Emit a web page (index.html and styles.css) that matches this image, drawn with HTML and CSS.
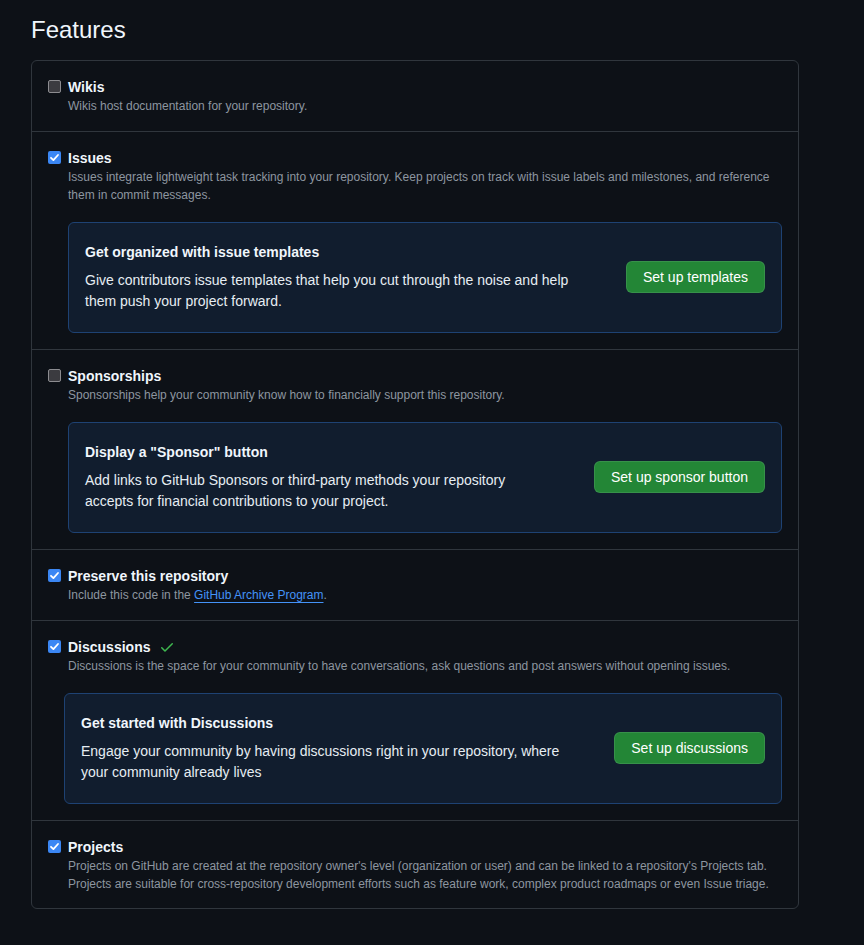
FILE: index.html
```html
<!DOCTYPE html>
<html lang="en">
<head>
<meta charset="utf-8">
<title>Features</title>
<link rel="stylesheet" href="styles.css">
</head>
<body>
<main class="page">
  <h2 class="page-title">Features</h2>
  <div class="feature-list">
    <section class="feature">
      <span class="checkbox"></span>
      <div class="feature-body">
        <div class="feature-title">Wikis</div>
        <p class="feature-desc">Wikis host documentation for your repository.</p>
      </div>
    </section>

    <section class="feature">
      <span class="checkbox checked"><svg viewBox="0 0 13 13" width="13" height="13"><path d="M3 6.8 5.4 9.1 10 4" fill="none" stroke="#fff" stroke-width="1.8" stroke-linecap="round" stroke-linejoin="round"/></svg></span>
      <div class="feature-body">
        <div class="feature-title">Issues</div>
        <p class="feature-desc">Issues integrate lightweight task tracking into your repository. Keep projects on track with issue labels and milestones, and reference them in commit messages.</p>
        <div class="promo">
          <div class="promo-text">
            <div class="promo-title">Get organized with issue templates</div>
            <p class="promo-desc">Give contributors issue templates that help you cut through the noise and help them push your project forward.</p>
          </div>
          <button class="btn-primary">Set up templates</button>
        </div>
      </div>
    </section>

    <section class="feature">
      <span class="checkbox"></span>
      <div class="feature-body">
        <div class="feature-title">Sponsorships</div>
        <p class="feature-desc">Sponsorships help your community know how to financially support this repository.</p>
        <div class="promo">
          <div class="promo-text">
            <div class="promo-title">Display a "Sponsor" button</div>
            <p class="promo-desc">Add links to GitHub Sponsors or third-party methods your repository accepts for financial contributions to your project.</p>
          </div>
          <button class="btn-primary">Set up sponsor button</button>
        </div>
      </div>
    </section>

    <section class="feature">
      <span class="checkbox checked"><svg viewBox="0 0 13 13" width="13" height="13"><path d="M3 6.8 5.4 9.1 10 4" fill="none" stroke="#fff" stroke-width="1.8" stroke-linecap="round" stroke-linejoin="round"/></svg></span>
      <div class="feature-body">
        <div class="feature-title">Preserve this repository</div>
        <p class="feature-desc">Include this code in the <a class="link" href="#">GitHub Archive Program</a>.</p>
      </div>
    </section>

    <section class="feature">
      <span class="checkbox checked"><svg viewBox="0 0 13 13" width="13" height="13"><path d="M3 6.8 5.4 9.1 10 4" fill="none" stroke="#fff" stroke-width="1.8" stroke-linecap="round" stroke-linejoin="round"/></svg></span>
      <div class="feature-body">
        <div class="feature-title">Discussions <svg class="ok-icon" viewBox="0 0 16 16" width="16" height="16"><path fill="#3fb950" d="M13.78 4.22a.75.75 0 0 1 0 1.06l-7.25 7.25a.75.75 0 0 1-1.06 0L2.22 9.28a.751.751 0 0 1 .018-1.042.751.751 0 0 1 1.042-.018L6 10.94l6.72-6.72a.75.75 0 0 1 1.06 0Z"/></svg></div>
        <p class="feature-desc">Discussions is the space for your community to have conversations, ask questions and post answers without opening issues.</p>
        <div class="promo promo-wide">
          <div class="promo-text">
            <div class="promo-title">Get started with Discussions</div>
            <p class="promo-desc">Engage your community by having discussions right in your repository, where your community already lives</p>
          </div>
          <button class="btn-primary">Set up discussions</button>
        </div>
      </div>
    </section>

    <section class="feature">
      <span class="checkbox checked"><svg viewBox="0 0 13 13" width="13" height="13"><path d="M3 6.8 5.4 9.1 10 4" fill="none" stroke="#fff" stroke-width="1.8" stroke-linecap="round" stroke-linejoin="round"/></svg></span>
      <div class="feature-body">
        <div class="feature-title">Projects</div>
        <p class="feature-desc">Projects on GitHub are created at the repository owner's level (organization or user) and can be linked to a repository's Projects tab. Projects are suitable for cross-repository development efforts such as feature work, complex product roadmaps or even Issue triage.</p>
      </div>
    </section>
  </div>
</main>
</body>
</html>
```

FILE: styles.css
```css
html, body {
  margin: 0;
  padding: 0;
  background: #0d1117;
}

body {
  font-family: "Liberation Sans", Arial, sans-serif;
  color: #e6edf3;
  min-height: 945px;
}

.page {
  width: 768px;
  padding: 12px 0 0 31px;
}

.page-title {
  margin: 0 0 12px;
  font-size: 24px;
  font-weight: 400;
  line-height: 36px;
  color: #f0f6fc;
}

.feature-list {
  border: 1px solid #30363d;
  border-radius: 6px;
}

.feature {
  display: flex;
  gap: 7px;
  padding: 16px;
  border-top: 1px solid #30363d;
}

.feature:first-child {
  border-top: none;
}

.feature:last-child {
  padding-bottom: 15px;
}

.checkbox {
  flex: none;
  box-sizing: border-box;
  width: 13px;
  height: 13px;
  margin-top: 3px;
  border: 1.5px solid #8c8c90;
  border-radius: 2px;
  background: #3b3b40;
}

.checkbox.checked {
  border: none;
  background: #3b87f4;
}

.checkbox svg {
  display: block;
}

.feature-body {
  flex: 1;
  min-width: 0;
}

.feature-title {
  font-size: 14px;
  font-weight: 700;
  line-height: 20px;
  color: #f0f6fc;
}

.ok-icon {
  vertical-align: -3px;
  margin-left: 5px;
}

.feature-desc {
  margin: 0;
  font-size: 12px;
  line-height: 18px;
  color: #8d96a0;
}

.link {
  color: #4493f8;
  text-decoration: underline;
  text-underline-offset: 3px;
}

.promo {
  display: flex;
  align-items: center;
  gap: 40px;
  margin-top: 18px;
  padding: 19px 16px 20px;
  border: 1px solid #1e4273;
  border-radius: 6px;
  background: #111d2e;
}

.promo-wide {
  margin-left: -4px;
}

.promo-text {
  flex: 1;
  min-width: 0;
}

.promo-title {
  font-size: 14px;
  font-weight: 700;
  line-height: 20px;
  color: #f0f6fc;
}

.promo-desc {
  margin: 8px 0 0;
  font-size: 14px;
  line-height: 21px;
  color: #e6edf3;
}

.btn-primary {
  flex: none;
  height: 32px;
  padding: 0 16px;
  border: 1px solid rgba(240, 246, 252, 0.1);
  border-radius: 6px;
  background: #238636;
  color: #ffffff;
  font-family: "Liberation Sans", Arial, sans-serif;
  font-size: 14px;
  line-height: 20px;
}
```
